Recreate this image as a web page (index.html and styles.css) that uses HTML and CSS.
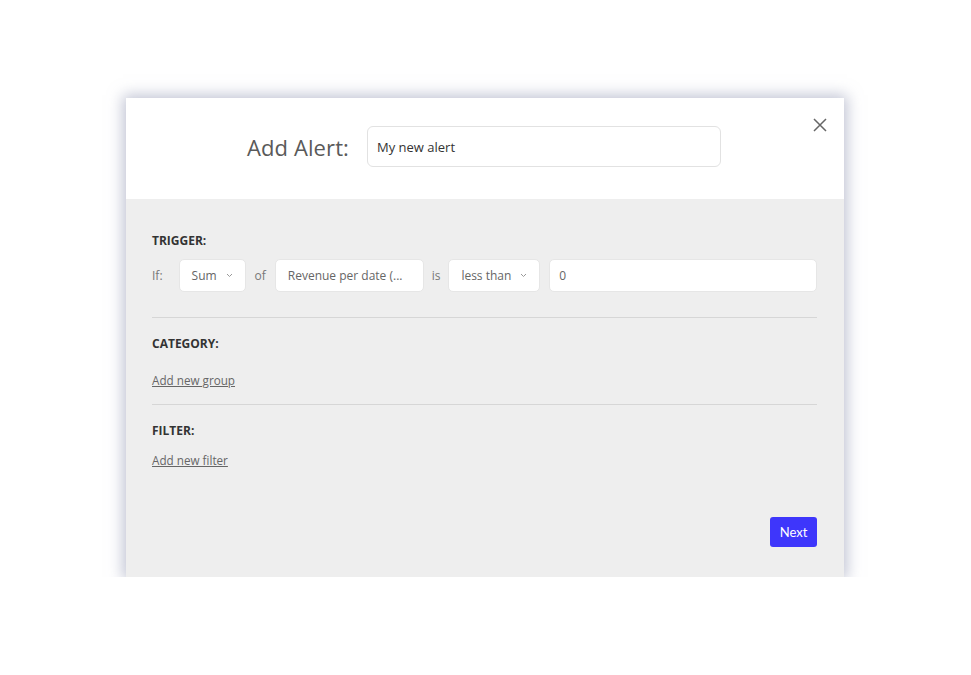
FILE: index.html
```html
<!DOCTYPE html>
<html>
<head>
<meta charset="utf-8">
<link rel="stylesheet" href="styles.css">
</head>
<body>
<div class="modal">
  <div class="modal-header">
    <span class="title">Add Alert:</span>
    <div class="name-input">My new alert</div>
    <svg class="close" width="14" height="14" viewBox="0 0 14 14"><path d="M1 1L13 13M13 1L1 13" stroke="#666" stroke-width="1.5" fill="none"/></svg>
  </div>
  <div class="modal-body">
    <section class="section trigger">
      <h3 class="label">TRIGGER:</h3>
      <div class="row">
        <span class="word">If:</span>
        <div class="field select sum">Sum <svg class="chev" width="7" height="5" viewBox="0 0 7 5"><path d="M1 1L3.5 3.5L6 1" stroke="#999" stroke-width="1" fill="none"/></svg></div>
        <span class="word">of</span>
        <div class="field rev">Revenue per date (...</div>
        <span class="word">is</span>
        <div class="field select less">less than <svg class="chev" width="7" height="5" viewBox="0 0 7 5"><path d="M1 1L3.5 3.5L6 1" stroke="#999" stroke-width="1" fill="none"/></svg></div>
        <div class="field value">0</div>
      </div>
    </section>
    <section class="section category">
      <h3 class="label">CATEGORY:</h3>
      <a class="link">Add new group</a>
    </section>
    <section class="section filter">
      <h3 class="label">FILTER:</h3>
      <a class="link">Add new filter</a>
    </section>
    <div class="actions">
      <button class="next">Next</button>
    </div>
  </div>
</div>
</body>
</html>
```
FILE: styles.css
```css
html, body {
  margin: 0;
  padding: 0;
  background: #ffffff;
  font-family: "Open Sans", "Noto Sans", sans-serif;
}
.modal {
  margin: 98px 0 0 126px;
  width: 718px;
  height: 479px;
  display: flex;
  flex-direction: column;
  box-shadow: 0 0 14px 3px rgba(140, 146, 175, 0.55);
  background: #eeeeee;
}
.modal-header {
  position: relative;
  height: 101px;
  background: #ffffff;
  display: flex;
  align-items: center;
  padding-left: 121px;
  box-sizing: border-box;
  padding-bottom: 4px;
}
.title {
  font-size: 22px;
  color: #5a5a5a;
  margin-right: 18px;
  letter-spacing: 0.1px;
}
.name-input {
  width: 354px;
  height: 41px;
  box-sizing: border-box;
  border: 1px solid #e2e2e2;
  border-radius: 6px;
  padding: 0 9px;
  display: flex;
  align-items: center;
  font-size: 13px;
  color: #333;
}
.close {
  position: absolute;
  top: 20px;
  right: 17px;
}
.modal-body {
  flex: 1;
  padding: 0 27px 30px 26px;
  display: flex;
  flex-direction: column;
}
.section {
  border-bottom: 1px solid #d6d6d6;
}
.label {
  margin: 0;
  font-size: 12px;
  font-weight: 700;
  color: #333;
  line-height: 16px;
}
.trigger {
  padding-top: 34px;
  height: 119px;
  box-sizing: border-box;
}
.trigger .row {
  margin-top: 10px;
  display: flex;
  align-items: center;
}
.word {
  font-size: 12px;
  color: #777;
}
.row .word:first-child { margin-right: 16px; }
.row .word:nth-child(3) { margin: 0 9px 0 9px; }
.row .word:nth-child(5) { margin: 0 8px 0 8px; }
.field {
  height: 33px;
  box-sizing: border-box;
  background: #ffffff;
  border: 1px solid #e6e6e6;
  border-radius: 5px;
  font-size: 12px;
  color: #666;
  display: flex;
  align-items: center;
  padding: 0 12px;
}
.select .chev { margin-left: auto; }
.sum { width: 67px; }
.rev { width: 149px; }
.less { width: 92px; }
.value { width: 268px; margin-left: 9px; padding-left: 9px; }
.category {
  padding-top: 18px;
  height: 87px;
  box-sizing: border-box;
}
.link {
  display: block;
  margin-top: 20px;
  font-size: 11.7px;
  color: #666;
  text-decoration: underline;
}
.filter {
  border-bottom: none;
  padding-top: 18px;
}
.filter .link { margin-top: 13px; }
.actions {
  margin-top: auto;
  display: flex;
  justify-content: flex-end;
}
.next {
  width: 47px;
  height: 30px;
  border: none;
  border-radius: 3px;
  background: #3e36fb;
  color: #ffffff;
  font-family: "Lato", "Open Sans", sans-serif;
  font-size: 13px;
  padding: 0;
}
```
